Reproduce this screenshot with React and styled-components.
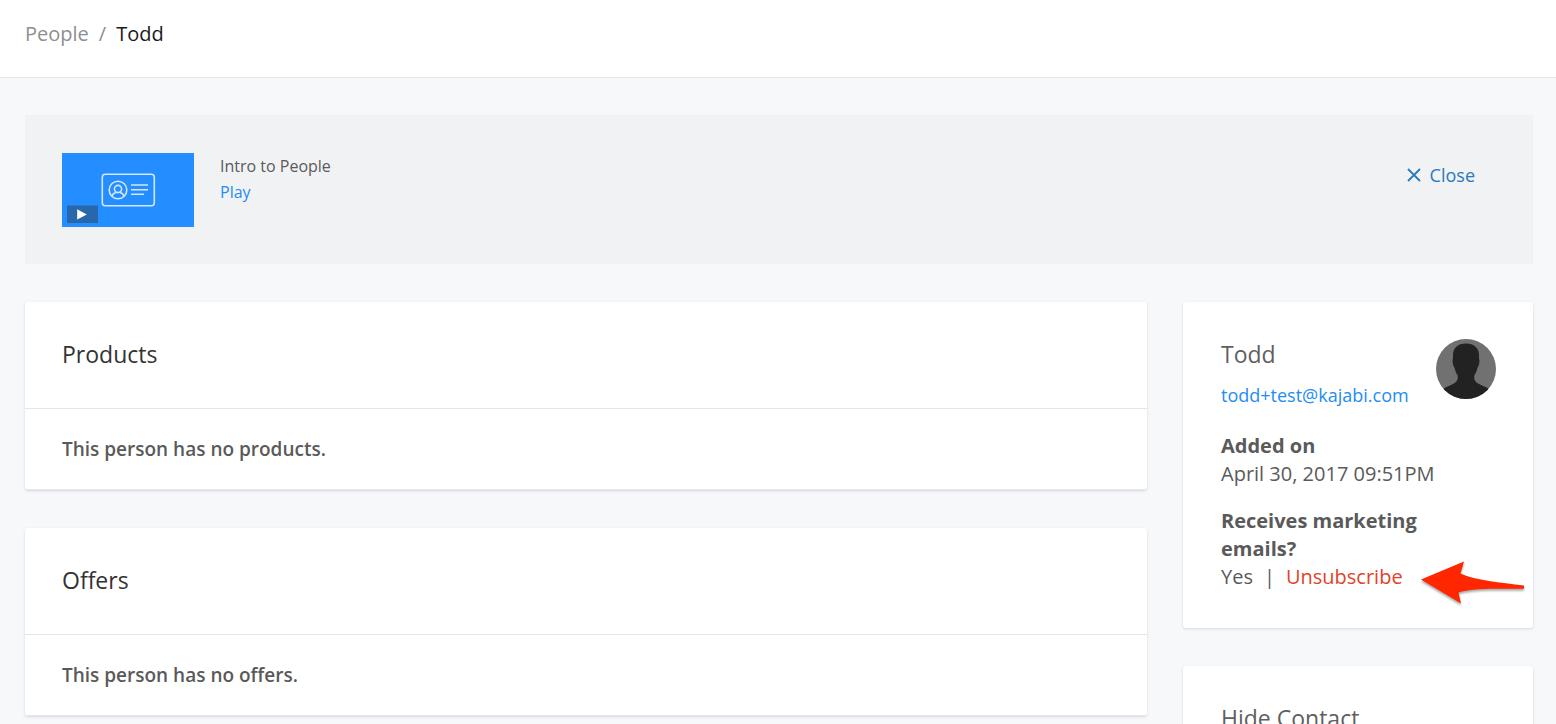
import styled, { createGlobalStyle } from "styled-components";

const GlobalStyle = createGlobalStyle`
  * {
    box-sizing: border-box;
  }

  body {
    margin: 0;
    background: #f7f8fa;
    color: #5a5a5a;
    font-family: "Open Sans", "Noto Sans", sans-serif;
    font-size: 20px;
    line-height: 28px;
  }

  h2,
  p,
  dl,
  dd {
    margin: 0;
  }

  a {
    text-decoration: none;
  }
`;

const Page = styled.div`
  height: 100vh;
  overflow-y: auto;
  scrollbar-width: none;
`;

const Header = styled.header`
  padding: 20px 25px 29px;
  background: #fff;
  border-bottom: 1px solid #e3e5e8;
`;

const Breadcrumb = styled.nav`
  display: flex;
  gap: 10px;
  color: #8f8f8f;
`;

const BreadcrumbLink = styled.a`
  color: #8f8f8f;
`;

const Current = styled.span`
  color: #1a1a1a;
`;

const Main = styled.main`
  padding: 37px 23px 38px 25px;
`;

const Banner = styled.section`
  display: flex;
  align-items: flex-start;
  gap: 26px;
  margin-bottom: 38px;
  padding: 38px 58px 37px 37px;
  background: #f1f2f4;
`;

const Thumbnail = styled.svg`
  display: block;
  flex: none;
`;

const BannerText = styled.div`
  flex: 1;
  font-size: 16px;
  line-height: 26px;
`;

const BlueLink = styled.a`
  color: #248cf5;
`;

const EmailLink = styled(BlueLink)`
  display: block;
  margin-bottom: 23px;
  font-size: 18px;
`;

const CloseButton = styled.button`
  display: flex;
  align-items: center;
  gap: 9px;
  margin-top: 8px;
  padding: 0;
  border: 0;
  background: none;
  color: #2b79bd;
  font: inherit;
  font-size: 18px;
  cursor: pointer;
`;

const Columns = styled.div`
  display: grid;
  grid-template-columns: minmax(0, 1fr) 350px;
  gap: 36px;
`;

const Stack = styled.div`
  display: flex;
  flex-direction: column;
  gap: 38px;
`;

const Card = styled.section`
  background: #fff;
  border-radius: 3px;
  box-shadow: 0 1px 3px rgba(40, 50, 70, 0.16);
`;

const CardHeader = styled.div`
  padding: 38px 37px 40px;
  border-bottom: 1px solid #e4e5ea;
`;

const CardTitle = styled.h2`
  color: ${(props) => (props.$muted ? "#5f5f5f" : "#333")};
  font-size: 23px;
  font-weight: 400;
  line-height: 28px;
`;

const EmptyMessage = styled.p`
  padding: 26px 37px;
  border-bottom: 1px solid #e4e5ea;
  border-radius: 0 0 3px 3px;
  font-size: 19px;
  font-weight: 600;
`;

const Profile = styled(Card)`
  display: flex;
  align-items: flex-start;
  padding: 37px 37px 37px 38px;
`;

const ProfileInfo = styled.div`
  flex: 1;
  padding-top: 1px;

  ${CardTitle} {
    margin-bottom: 13px;
  }
`;

const Avatar = styled.svg`
  flex: none;
`;

const Details = styled.dl`
  display: grid;
  gap: 19px;

  dt {
    font-weight: 700;
  }
`;

const Subscription = styled.dd`
  display: flex;
  gap: 11px;
  position: relative;
`;

const UnsubscribeButton = styled.button`
  padding: 0;
  border: 0;
  background: none;
  color: #e2432a;
  font: inherit;
  cursor: pointer;
`;

const Arrow = styled.svg`
  position: absolute;
  top: -2px;
  left: 199px;
  overflow: visible;
  filter: drop-shadow(0 2px 1px rgba(0, 0, 0, 0.35));
  pointer-events: none;
`;

const ContactCard = styled(Card)`
  padding: 38px 37px 40px 38px;
`;

const VideoThumbnail = () => (
  <Thumbnail width="132" height="74" viewBox="0 0 132 74" aria-hidden="true">
    <rect width="132" height="74" fill="#248dff" />
    <g fill="none" stroke="#d3e8ff" strokeWidth="1.6">
      <rect x="40.3" y="21.3" width="52" height="31.5" rx="3" />
      <circle cx="56" cy="37" r="8.8" />
      <circle cx="56" cy="36" r="3.6" />
      <path d="M49.8 43.2c1-2.4 2.6-3.5 4.2-3.7M62.2 43.2c-1-2.4-2.6-3.5-4.2-3.7" />
      <path d="M69 32h17M69 36.7h17M69 41.3h13" />
    </g>
    <rect x="5" y="52.5" width="31" height="17.5" fill="#2867a9" />
    <path d="M15.2 56.3v10.2l9.6-5.1z" fill="#fff" />
  </Thumbnail>
);

const CloseIcon = () => (
  <svg width="14" height="14" viewBox="0 0 14 14" aria-hidden="true">
    <path d="M1 1l12 12M13 1L1 13" stroke="currentColor" strokeWidth="1.8" />
  </svg>
);

const PersonAvatar = () => (
  <Avatar width="60" height="60" viewBox="0 0 60 60" role="img" aria-label="Todd">
    <clipPath id="avatar-circle">
      <circle cx="30" cy="30" r="30" />
    </clipPath>
    <g clipPath="url(#avatar-circle)">
      <rect width="60" height="60" fill="#717171" />
      <path
        d="M30 4.500c-8.200 0-13 4.500-13 11.500 0 1.500.2 3-.3 4.500-.4 2 .2 6.500 1.800 8.200.8 3.500 1.700 5.500 3 7.300 1 4-.5 6.500-3.600 8.500-3 2-7 3-10.900 5.500V60h46V50c-3.900-2.500-7.900-3.500-10.900-5.500-3.100-2-4.600-4.500-3.600-8.500 1.300-1.800 2.200-3.800 3-7.300 1.600-1.700 2.200-6.200 1.800-8.200-.5-1.500-.3-3-.3-4.500 0-7-4.800-11.500-13-11.500z"
        fill="#222"
      />
    </g>
  </Avatar>
);

const PointerArrow = () => (
  <Arrow width="106" height="44" viewBox="0 0 106 44" aria-hidden="true">
    <path
      d="M1 18.500L44 .5 40.500 12.500C56 19.500 80 21.500 104 24.500v3.200C80 28.300 55 26.500 38.500 31.500L41 42.500z"
      fill="#ff2600"
    />
  </Arrow>
);

const sections = [
  { title: "Products", message: "This person has no products." },
  { title: "Offers", message: "This person has no offers." },
];

const App = () => {
  return (
    <Page>
      <GlobalStyle />
      <Header>
        <Breadcrumb aria-label="Breadcrumb">
          <BreadcrumbLink href="#people">People</BreadcrumbLink>
          <span>/</span>
          <Current aria-current="page">Todd</Current>
        </Breadcrumb>
      </Header>
      <Main>
        <Banner>
          <VideoThumbnail />
          <BannerText>
            <p>Intro to People</p>
            <BlueLink href="#play">Play</BlueLink>
          </BannerText>
          <CloseButton type="button">
            <CloseIcon />
            Close
          </CloseButton>
        </Banner>
        <Columns>
          <Stack>
            {sections.map((section) => (
              <Card key={section.title}>
                <CardHeader>
                  <CardTitle>{section.title}</CardTitle>
                </CardHeader>
                <EmptyMessage>{section.message}</EmptyMessage>
              </Card>
            ))}
          </Stack>
          <Stack>
            <Profile>
              <ProfileInfo>
                <CardTitle $muted>Todd</CardTitle>
                <EmailLink href="mailto:todd+test@kajabi.com">
                  todd+test@kajabi.com
                </EmailLink>
                <Details>
                  <div>
                    <dt>Added on</dt>
                    <dd>April 30, 2017 09:51PM</dd>
                  </div>
                  <div>
                    <dt>Receives marketing emails?</dt>
                    <Subscription>
                      <span>Yes</span>
                      <span>|</span>
                      <UnsubscribeButton type="button">
                        Unsubscribe
                      </UnsubscribeButton>
                      <PointerArrow />
                    </Subscription>
                  </div>
                </Details>
              </ProfileInfo>
              <PersonAvatar />
            </Profile>
            <ContactCard>
              <CardTitle $muted>Hide Contact</CardTitle>
            </ContactCard>
          </Stack>
        </Columns>
      </Main>
    </Page>
  );
};

export default App;
